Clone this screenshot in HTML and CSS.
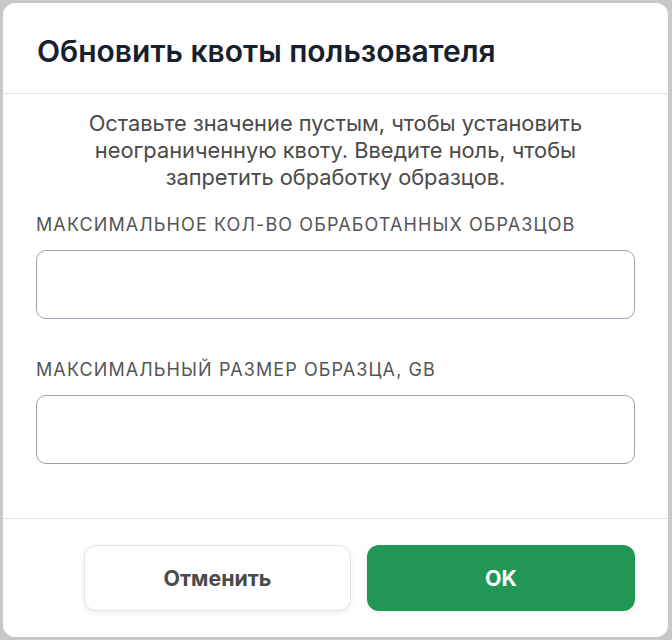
FILE: index.html
```html
<!DOCTYPE html>
<html lang="ru">
<head>
<meta charset="utf-8">
<link rel="stylesheet" href="styles.css">
</head>
<body>
<div class="modal">
  <div class="modal-header">
    <h2 class="title">Обновить квоты пользователя</h2>
  </div>
  <div class="modal-body">
    <p class="hint">Оставьте значение пустым, чтобы установить неограниченную квоту. Введите ноль, чтобы запретить обработку образцов.</p>
    <label class="field">
      <span class="label">Максимальное кол-во обработанных образцов</span>
      <input class="input" type="text">
    </label>
    <label class="field">
      <span class="label">Максимальный размер образца, GB</span>
      <input class="input" type="text">
    </label>
  </div>
  <div class="modal-footer">
    <button class="btn btn-cancel">Отменить</button>
    <button class="btn btn-ok">OK</button>
  </div>
</div>
</body>
</html>
```
FILE: styles.css
```css
* { box-sizing: border-box; }
html, body { height: 100%; }
body {
  margin: 0;
  padding: 3px 4px 3px 3px;
  background: #c8c8c8;
  font-family: Inter, "Noto Sans", sans-serif;
}
.modal {
  height: 634px;
  background: #fff;
  border-radius: 12px;
  display: flex;
  flex-direction: column;
}
.modal-header {
  height: 91px;
  border-bottom: 1px solid #e4e4ea;
  padding: 5px 34px 0;
  display: flex;
  align-items: center;
}
.title {
  margin: 0;
  font-size: 30px;
  font-weight: 600;
  color: #18202c;
}
.modal-body {
  flex: 1;
  padding: 16px 33px 0;
  border-bottom: 1px solid #e4e4ea;
}
.hint {
  margin: 0 auto 22px;
  max-width: 560px;
  text-align: center;
  font-size: 21.8px;
  line-height: 27px;
  color: #4a4a4a;
}
.field {
  display: flex;
  flex-direction: column;
  margin-bottom: 39px;
}
.label {
  text-transform: uppercase;
  font-size: 18px;
  letter-spacing: 1.1px;
  color: #555;
  line-height: 24px;
  margin-bottom: 13px;
}
.input {
  height: 69px;
  border: 1px solid #a19db2;
  border-radius: 10px;
  font: inherit;
  font-size: 18px;
  padding: 0 16px;
  outline: none;
}
.modal-footer {
  height: 118px;
  padding: 0 33px;
  display: flex;
  justify-content: flex-end;
  align-items: center;
  gap: 16px;
}
.btn {
  width: 267px;
  height: 66px;
  border-radius: 12px;
  font-family: inherit;
  font-size: 21.4px;
  font-weight: 700;
  cursor: pointer;
}
.btn-cancel {
  background: #fff;
  border: 1px solid #e2e2ea;
  color: #4a4a4a;
  box-shadow: 0 2px 6px rgba(0,0,0,0.08);
}
.btn-ok {
  width: 268px;
  background: #229654;
  border: none;
  color: #fff;
  box-shadow: 0 2px 6px rgba(0,0,0,0.08);
}
```
